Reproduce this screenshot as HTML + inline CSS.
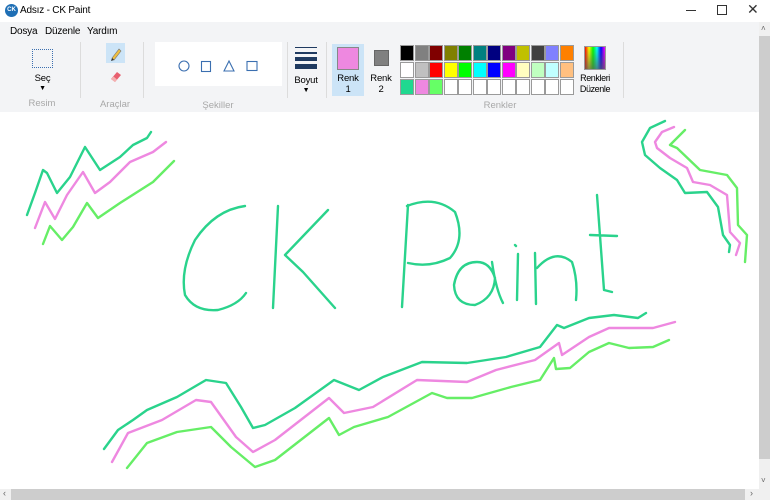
<!DOCTYPE html>
<html><head><meta charset="utf-8"><style>
*{margin:0;padding:0;box-sizing:border-box}
body{width:770px;height:500px;overflow:hidden;background:#fff;font-family:"Liberation Sans",sans-serif;font-size:10px;color:#000;position:relative}
.a{position:absolute}
.lbl{position:absolute;color:#a8a8a8;font-size:9.5px;text-align:center}
.sep{position:absolute;width:1px;background:#dcdcdc;top:42px;height:56px}
.t{position:absolute;font-size:9.5px;text-align:center;line-height:11px;letter-spacing:-0.2px}
.c{position:absolute;width:14px;height:16px;border:1px solid #9a9a9a}
</style></head><body>
<div class="a" style="left:0;top:0;width:770px;height:22px;background:#fff"></div>
<div class="a" style="left:5px;top:4px;width:13px;height:13px;border-radius:50%;background:#1f6fb5;color:#fff;font-size:6px;font-weight:bold;line-height:13px;text-align:center">CK</div>
<div class="a" style="left:20px;top:5px;font-size:10px;letter-spacing:-0.2px">Adsız - CK Paint</div>
<div class="a" style="left:686px;top:10px;width:10px;height:1px;background:#333"></div>
<div class="a" style="left:717px;top:5px;width:10px;height:10px;border:1px solid #333"></div>
<div class="a" style="left:747px;top:1px;font-size:14px;color:#333">✕</div>
<div class="a" style="left:0;top:22px;width:759px;height:90px;background:#f3f4f6"></div>
<div class="a" style="left:10px;top:26px;letter-spacing:-0.2px">Dosya</div>
<div class="a" style="left:45px;top:26px;letter-spacing:-0.2px">Düzenle</div>
<div class="a" style="left:87px;top:26px;letter-spacing:-0.2px">Yardım</div>
<div class="a" style="left:32px;top:49px;width:21px;height:19px;border:1px dotted #3b6fb0"></div>
<div class="t" style="left:30px;top:73px;width:25px">Seç</div>
<div class="t" style="left:30px;top:83px;width:25px;font-size:7px">▼</div>
<div class="lbl" style="left:20px;top:98px;width:44px">Resim</div>
<div class="sep" style="left:80px"></div>
<div class="a" style="left:106px;top:43px;width:19px;height:20px;background:#cce4f7"></div>
<svg class="a" style="left:106px;top:43px" width="19" height="20"><path d="M6 15 L13 6 L15 8 L8 17 Z" fill="#f0c040" stroke="#777" stroke-width=".6"/><path d="M6 15 L5 18 L8 17" fill="#333"/></svg>
<svg class="a" style="left:106px;top:67px" width="19" height="16"><path d="M5 12 L11 5 L15 8 L9 15 Z" fill="#e86070"/><path d="M5 12 L7.5 9.5 L11 12.5 L9 15 Z" fill="#f4b0b0"/></svg>
<div class="lbl" style="left:93px;top:99px;width:44px">Araçlar</div>
<div class="sep" style="left:143px"></div>
<div class="a" style="left:155px;top:42px;width:127px;height:44px;background:#fff"></div>
<svg class="a" style="left:155px;top:42px" width="127" height="44" fill="none" stroke="#3b6fb0" stroke-width="1.1"><circle cx="29" cy="24" r="5"/><rect x="46.5" y="19.5" width="9" height="10"/><path d="M69 29 L74 19 L79 29 Z"/><rect x="92" y="19.5" width="10" height="9"/></svg>
<div class="lbl" style="left:196px;top:100px;width:44px">Şekiller</div>
<div class="sep" style="left:287px"></div>
<div class="a" style="left:295px;top:47px;width:22px;height:1px;background:#1f3a60"></div>
<div class="a" style="left:295px;top:52px;width:22px;height:2px;background:#1f3a60"></div>
<div class="a" style="left:295px;top:57px;width:22px;height:4px;background:#1f3a60"></div>
<div class="a" style="left:295px;top:64px;width:22px;height:5px;background:#1f3a60"></div>
<div class="t" style="left:291px;top:75px;width:30px">Boyut</div>
<div class="t" style="left:291px;top:85px;width:30px;font-size:7px">▼</div>
<div class="sep" style="left:326px"></div>
<div class="a" style="left:332px;top:44px;width:32px;height:52px;background:#cce4f7"></div>
<div class="a" style="left:337px;top:47px;width:22px;height:23px;background:#ee88e0;border:1px solid #888"></div>
<div class="t" style="left:332px;top:73px;width:32px">Renk<br>1</div>
<div class="a" style="left:374px;top:50px;width:15px;height:16px;background:#808080;border:1px solid #666"></div>
<div class="t" style="left:365px;top:73px;width:32px">Renk<br>2</div>
<div id="pal"></div>
<div class="a" style="left:584px;top:46px;width:22px;height:24px;border:1px solid #999;background:linear-gradient(to bottom,rgba(255,255,255,0),rgba(90,90,90,.7)),linear-gradient(to right,red,yellow,lime,cyan,blue,magenta)"></div>
<div class="t" style="left:576px;top:73px;width:38px;font-size:9px;letter-spacing:-0.4px">Renkleri<br>Düzenle</div>
<div class="lbl" style="left:478px;top:100px;width:44px">Renkler</div>
<div class="sep" style="left:623px"></div>
<div class="a" style="left:759px;top:22px;width:11px;height:467px;background:#f0f0f0"></div>
<div class="a" style="left:759px;top:36px;width:11px;height:423px;background:#cdcdcd"></div>
<div class="a" style="left:761px;top:24px;font-size:8px;color:#666">˄</div>
<div class="a" style="left:761px;top:476px;font-size:8px;color:#666">˅</div>
<div class="a" style="left:0;top:489px;width:770px;height:11px;background:#f0f0f0"></div>
<div class="a" style="left:11px;top:489px;width:734px;height:11px;background:#cdcdcd"></div>
<div class="a" style="left:3px;top:488px;font-size:9px;color:#666">‹</div>
<div class="a" style="left:750px;top:488px;font-size:9px;color:#666">›</div>
<svg class="a" style="left:0;top:0" width="770" height="500" fill="none" stroke-width="2.4" stroke-linecap="round" stroke-linejoin="round">
<g stroke="#2ad38c">
<path d="M245 206 Q215 210 195 240 Q180 270 185 295 Q195 312 218 310 Q238 305 246 293"/>
<path d="M278 206 L273 308 M328 210 L285 255 L303 272 L335 308"/>
<path d="M408 205 L402 307 M407 206 Q435 195 455 212 Q466 240 450 258 Q430 268 408 263"/>
<path d="M477 262 Q458 262 454 285 Q455 305 475 305 Q494 298 495 278 Q490 262 477 262 M492 262 Q496 290 503 303"/>
<path d="M515 245 L516 246 M518 254 L517 300 M535 253 L536 304 M537 268 Q555 248 572 262 Q578 280 576 300"/>
<path d="M597 195 L604 290 L612 292 M590 235 L617 236"/>
<path d="M27 215 L35 193 L43 170 L47 173 L57 193 L70 177 L85 147 L100 170 L120 157 L133 145 L147 138 L151 132"/>
<path d="M665 121 L650 128 L642 142 L645 155 L660 168 L677 180 L685 193 L707 192 L718 207 L723 235 L730 245 L729 252"/>
<path d="M104 449 L118 430 L133 420 L147 410 L177 397 L206 380 L226 383 L241 407 L253 428 L265 425 L295 408 L334 380 L359 390 L383 377 L422 362 L467 363 L506 357 L540 347 L557 325 L564 328 L589 318 L614 315 L638 318 L646 313"/>
</g>
<g stroke="#ee88e0">
<path d="M35 228 L45 202 L55 219 L67 195 L83 172 L95 193 L110 182 L130 162 L153 152 L166 142"/>
<path d="M674 127 L662 132 L655 142 L657 148 L670 158 L687 168 L693 182 L710 185 L727 195 L730 232 L740 243 L736 255"/>
<path d="M112 462 L128 433 L162 420 L196 400 L211 402 L236 437 L253 452 L275 440 L329 398 L344 413 L373 407 L417 380 L467 382 L496 370 L535 360 L559 343 L562 355 L589 337 L609 328 L653 328 L675 322"/>
</g>
<g stroke="#66ee66">
<path d="M43 244 L50 226 L62 240 L73 227 L87 203 L98 218 L120 203 L153 182 L174 161"/>
<path d="M685 130 L670 145 L677 148 L700 170 L727 175 L737 188 L738 225 L747 235 L745 262"/>
<path d="M127 468 L147 443 L177 432 L211 427 L231 447 L255 467 L275 460 L329 418 L339 435 L354 427 L388 417 L432 393 L447 398 L472 398 L511 387 L540 380 L554 358 L556 369 L570 368 L589 352 L609 343 L629 348 L653 347 L669 340"/>
</g>
</svg>
<script>
var cols=[["#000","#808080","#800000","#808000","#008000","#008080","#000080","#800080","#c0c000","#404040","#8080ff","#ff8000"],
["#fff","#c0c0c0","#f00","#ff0","#0f0","#0ff","#00f","#f0f","#ffffc0","#c0ffc0","#c0ffff","#ffc080"],
["#20d890","#ee88e0","#66ff66","#fff","#fff","#fff","#fff","#fff","#fff","#fff","#fff","#fff"]];
var h="";for(var r=0;r<3;r++)for(var c=0;c<12;c++)h+='<div class="c" style="left:'+(400+c*14.5)+'px;top:'+(45+r*17)+'px;background:'+cols[r][c]+'"></div>';
document.getElementById("pal").innerHTML=h;
</script>
</body></html>
